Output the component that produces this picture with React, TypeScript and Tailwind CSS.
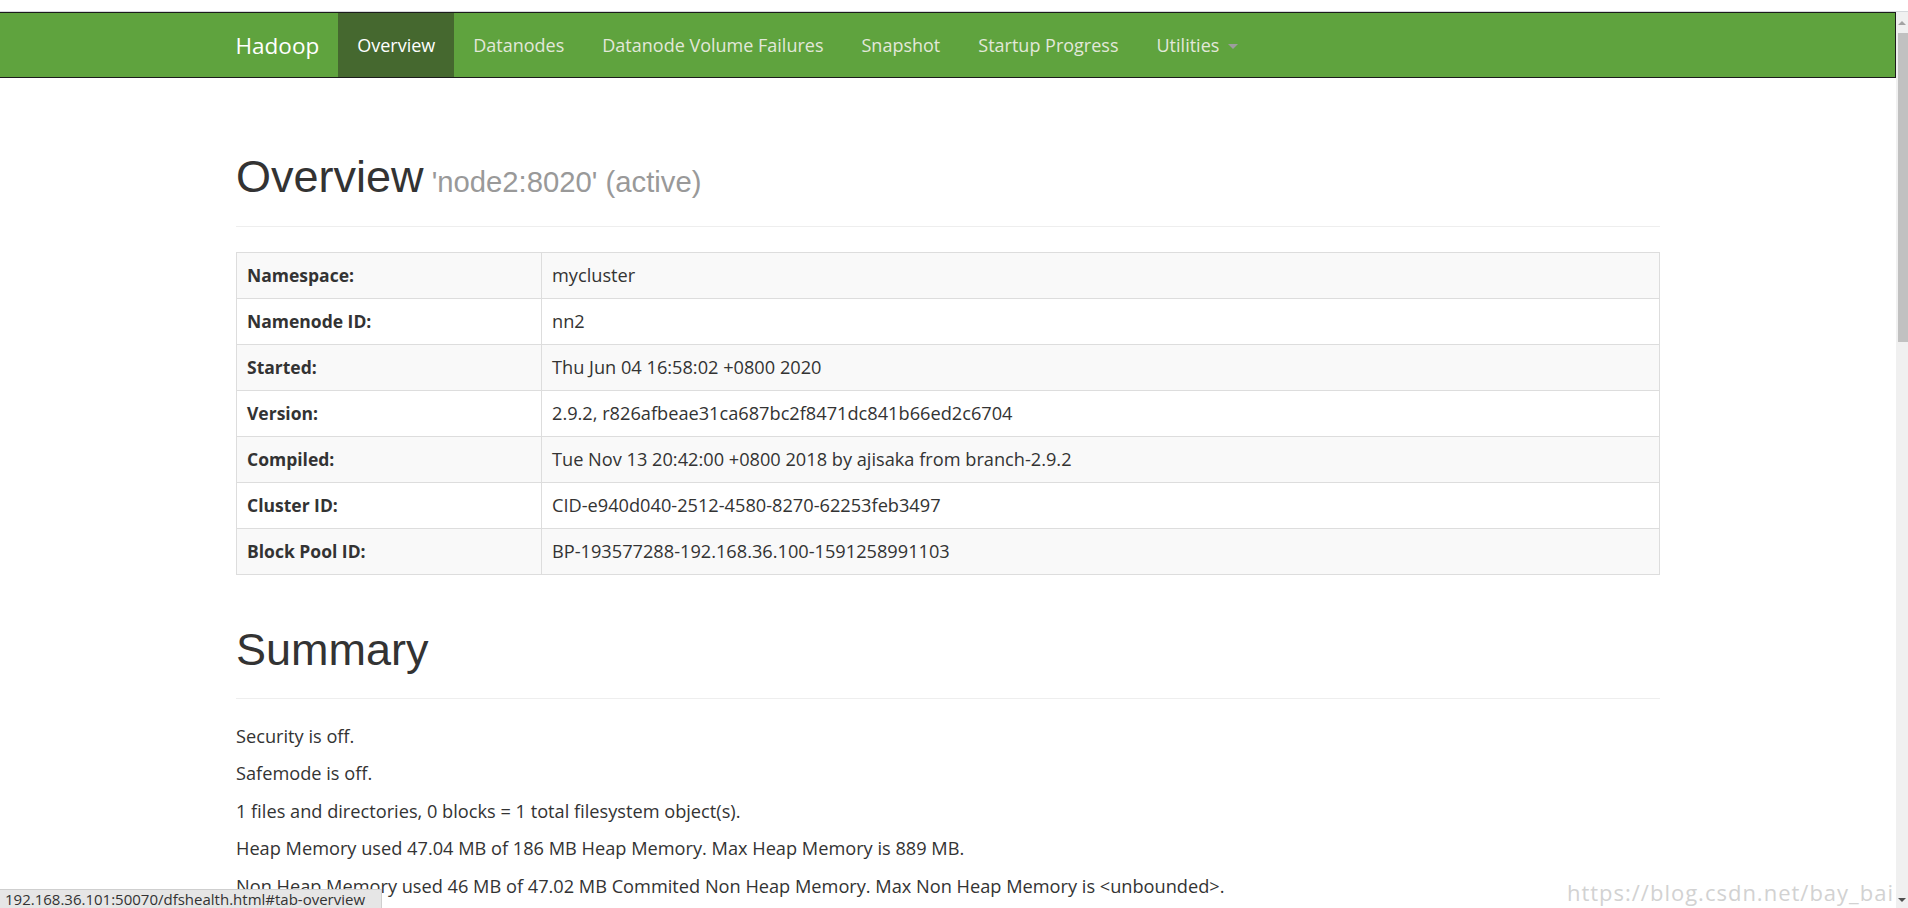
const navItems = [
  "Overview",
  "Datanodes",
  "Datanode Volume Failures",
  "Snapshot",
  "Startup Progress",
]

const info: [string, string][] = [
  ["Namespace:", "mycluster"],
  ["Namenode ID:", "nn2"],
  ["Started:", "Thu Jun 04 16:58:02 +0800 2020"],
  ["Version:", "2.9.2, r826afbeae31ca687bc2f8471dc841b66ed2c6704"],
  ["Compiled:", "Tue Nov 13 20:42:00 +0800 2018 by ajisaka from branch-2.9.2"],
  ["Cluster ID:", "CID-e940d040-2512-4580-8270-62253feb3497"],
  ["Block Pool ID:", "BP-193577288-192.168.36.100-1591258991103"],
]

const summary = [
  "Security is off.",
  "Safemode is off.",
  "1 files and directories, 0 blocks = 1 total filesystem object(s).",
  "Heap Memory used 47.04 MB of 186 MB Heap Memory. Max Heap Memory is 889 MB.",
  "Non Heap Memory used 46 MB of 47.02 MB Commited Non Heap Memory. Max Non Heap Memory is <unbounded>.",
]

function Navbar() {
  return (
    <nav className="h-[66px] bg-[#5fa33e] border-y border-r border-[#1c1c1c]">
      <div className="mx-auto flex h-full w-[1462px] px-[19px]">
        <a className="flex h-full items-center pr-[19px] text-[22.5px] text-white">Hadoop</a>
        <ul className="flex h-full">
          {navItems.map((item, i) => (
            <li key={item} className="h-full">
              <a
                className={`flex h-full items-center px-[19px] text-[18px] ${
                  i === 0 ? "bg-[#45682f] text-white" : "text-[#e2e8da]"
                }`}
              >
                {item}
              </a>
            </li>
          ))}
          <li className="h-full">
            <a className="flex h-full items-center px-[19px] text-[18px] text-[#e2e8da]">
              Utilities
              <span className="ml-[9px] mt-[2px] h-0 w-0 border-x-[5px] border-t-[5px] border-x-transparent border-t-[#9d9d9d]" />
            </a>
          </li>
        </ul>
      </div>
    </nav>
  )
}

function PageHeader({
  title,
  small,
  top,
  gap,
}: {
  title: string
  small?: string
  top: string
  gap: string
}) {
  return (
    <div className={`${top} mb-[25px] border-b border-[#eeeeee] pb-[11px]`}>
      <h1
        className={`${gap} text-[45px] leading-[49.5px] text-[#333333]`}
        style={{ fontFamily: '"Liberation Sans", Arial, sans-serif' }}
      >
        {title}
        {small && <small className="text-[29.25px] text-[#999999]"> {small}</small>}
      </h1>
    </div>
  )
}

export default function App() {
  return (
    <div
      className="flex h-[908px] w-[1908px] flex-col overflow-hidden bg-white text-[18.2px] leading-[25px] text-[#333333]"
      style={{ fontFamily: '"Open Sans", "Noto Sans", sans-serif' }}
    >
      <div className="h-[12px] shrink-0 border-b border-[#d5d8dc]" />
      <div className="flex min-h-0 flex-1">
        <div className="relative min-w-0 flex-1 overflow-hidden">
          <Navbar />

          <div className="mx-auto w-[1462px] px-[19px]">
            <PageHeader
              title="Overview"
              small="'node2:8020' (active)"
              top="mt-[74px]"
              gap="mb-[7px]"
            />

            {/* overview table */}
            <table className="w-full border-collapse border border-[#dddddd]">
              <tbody>
                {info.map(([k, v], i) => (
                  <tr key={k} className={i % 2 === 0 ? "bg-[#f9f9f9]" : "bg-white"}>
                    <th className="w-[305px] border border-[#dddddd] px-[10px] py-[10px] text-left text-[17.5px] font-bold">
                      {k}
                    </th>
                    <td className="border border-[#dddddd] px-[10px] py-[10px]">{v}</td>
                  </tr>
                ))}
              </tbody>
            </table>

            <PageHeader title="Summary" top="mt-[50px]" gap="mb-[12.5px]" />

            {summary.map((s) => (
              <p key={s} className="mb-[12.5px]">
                {s}
              </p>
            ))}
          </div>

          {/* browser status bar */}
          <div className="absolute bottom-0 left-0 h-[19px] w-[382px] border-t border-r border-[#cfcfcf] bg-[#e6e6e6] pl-[5px] text-[15px] leading-[18px] text-[#333333]">
            192.168.36.101:50070/dfshealth.html#tab-overview
          </div>

          {/* watermark */}
          <div className="absolute bottom-[4px] right-[2px] text-[22px] leading-[24px] tracking-[1px] text-[#d2d2d2]">
            https://blog.csdn.net/bay_bai
          </div>
        </div>

        {/* scrollbar */}
        <div className="flex w-[12px] shrink-0 flex-col bg-[#f0f0f0]">
          <div className="flex h-[21px] items-center justify-center">
            <span className="h-0 w-0 border-x-[4px] border-b-[4px] border-x-transparent border-b-[#a3a3a3]" />
          </div>
          <div className="ml-[2px] h-[309px] bg-[#c1c1c1]" />
          <div className="flex-1" />
          <div className="flex h-[17px] items-center justify-center">
            <span className="h-0 w-0 border-x-[4px] border-t-[4px] border-x-transparent border-t-[#505050]" />
          </div>
        </div>
      </div>
    </div>
  )
}
